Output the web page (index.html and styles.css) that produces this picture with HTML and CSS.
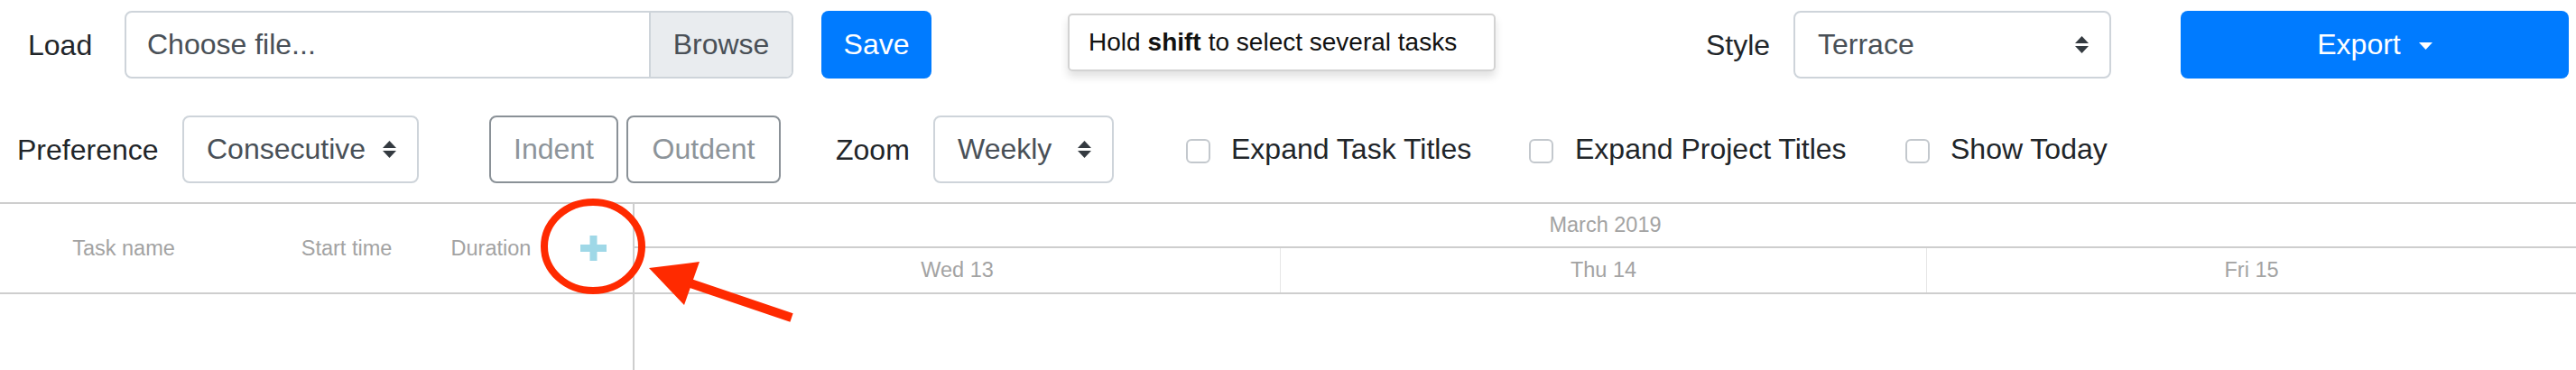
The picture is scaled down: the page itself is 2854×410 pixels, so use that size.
FILE: index.html
```html
<!DOCTYPE html>
<html>
<head>
<meta charset="utf-8">
<link rel="stylesheet" href="styles.css">
</head>
<body>
<div class="page">
  <div class="toolbar row1">
    <div class="label load-label">Load</div>
    <div class="file-input">
      <span class="file-text">Choose file...</span>
      <span class="file-browse">Browse</span>
    </div>
    <div class="btn btn-primary save-btn">Save</div>
    <div class="hint">Hold <b>shift</b> to select several tasks</div>
    <div class="label style-label">Style</div>
    <div class="select style-select">
      <span class="select-text">Terrace</span>
      <svg class="select-arrows" width="15" height="19" viewBox="0 0 15 19"><polygon points="0,8 7.5,0 15,8" fill="#343a40"/><polygon points="0,11 15,11 7.5,19" fill="#343a40"/></svg>
    </div>
    <div class="btn btn-primary export-btn">
      <span>Export</span>
      <svg class="caret" width="15" height="8" viewBox="0 0 15 8"><polygon points="0,0 15,0 7.5,8" fill="#fff"/></svg>
    </div>
  </div>

  <div class="toolbar row2">
    <div class="label pref-label">Preference</div>
    <div class="select pref-select">
      <span class="select-text">Consecutive</span>
      <svg class="select-arrows" width="15" height="19" viewBox="0 0 15 19"><polygon points="0,8 7.5,0 15,8" fill="#343a40"/><polygon points="0,11 15,11 7.5,19" fill="#343a40"/></svg>
    </div>
    <div class="btn btn-outline indent-btn">Indent</div>
    <div class="btn btn-outline outdent-btn">Outdent</div>
    <div class="label zoom-label">Zoom</div>
    <div class="select zoom-select">
      <span class="select-text">Weekly</span>
      <svg class="select-arrows" width="15" height="19" viewBox="0 0 15 19"><polygon points="0,8 7.5,0 15,8" fill="#343a40"/><polygon points="0,11 15,11 7.5,19" fill="#343a40"/></svg>
    </div>
    <label class="check check1"><span class="box"></span><span class="check-text">Expand Task Titles</span></label>
    <label class="check check2"><span class="box"></span><span class="check-text">Expand Project Titles</span></label>
    <label class="check check3"><span class="box"></span><span class="check-text">Show Today</span></label>
  </div>

  <div class="gantt">
    <div class="grid">
      <div class="grid-header">
        <div class="gcol col-name">Task name</div>
        <div class="gcol col-start">Start time</div>
        <div class="gcol col-dur">Duration</div>
        <div class="gcol col-add">
          <svg width="29" height="28" viewBox="0 0 29 28"><rect x="10.5" y="0" width="8" height="28" fill="#9fd8e7"/><rect x="0" y="10" width="29" height="8" fill="#9fd8e7"/></svg>
        </div>
      </div>
    </div>
    <div class="timeline">
      <div class="scale-row month">March 2019</div>
      <div class="scale-row days">
        <div class="day">Wed 13</div>
        <div class="day">Thu 14</div>
        <div class="day last">Fri 15</div>
      </div>
    </div>
  </div>

  <svg class="annot" width="2854" height="410" viewBox="0 0 2854 410">
    <ellipse cx="657" cy="273" rx="54" ry="49" fill="none" stroke="#ff2a00" stroke-width="8"/>
    <line x1="762" y1="313" x2="877" y2="352" stroke="#ff2a00" stroke-width="10"/>
    <polygon points="719,297 775,290 758,338" fill="#ff2a00"/>
  </svg>
</div>
</body>
</html>
```

FILE: styles.css
```css
* { box-sizing: border-box; }
html, body { margin: 0; padding: 0; background: #fff; }
body {
  font-family: "Liberation Sans", Arial, Helvetica, sans-serif;
  font-size: 32px;
  color: #212529;
  width: 2854px;
  height: 410px;
  overflow: hidden;
}
.page { position: relative; width: 2854px; height: 410px; padding-top: 12px; }

.toolbar { display: flex; align-items: center; height: 75px; }
.row2 { margin-top: 41px; }

.label { line-height: 1; white-space: nowrap; }
.load-label { width: 138px; padding-left: 31px; }
.style-label { margin-left: 233px; width: 97px; }
.pref-label { width: 202px; padding-left: 19px; }
.zoom-label { margin-left: 61px; width: 108px; }

.file-input {
  display: flex;
  width: 741px;
  height: 75px;
  border: 2px solid #ced4da;
  border-radius: 8px;
  overflow: hidden;
  color: #495057;
}
.file-text { flex: 1; display: flex; align-items: center; padding-left: 23px; }
.file-browse {
  display: flex; align-items: center; justify-content: center;
  width: 158px;
  background: #e9ecef;
  border-left: 2px solid #ced4da;
}

.btn {
  display: flex; align-items: center; justify-content: center;
  height: 75px;
  border-radius: 8px;
  white-space: nowrap;
}
.btn-primary { background: #007bff; color: #fff; }
.save-btn { margin-left: 31px; width: 122px; }
.export-btn { margin-left: 77px; width: 430px; gap: 20px; }
.caret { display: block; margin-top: 2px; }

.hint {
  margin-left: 151px;
  width: 474px;
  height: 64px;
  align-self: flex-start;
  margin-top: 3px;
  border: 2px solid #d3d3d3;
  border-radius: 5px;
  box-shadow: 0 6px 10px rgba(0, 0, 0, 0.12);
  font-family: "Liberation Sans", Arial, sans-serif;
  font-size: 28px;
  color: #111;
  display: flex; align-items: center;
  padding-left: 21px;
  white-space: nowrap;
}
.hint b { font-weight: bold; margin: 0 8px; }

.select {
  display: flex; align-items: center;
  height: 75px;
  border: 2px solid #ced4da;
  border-radius: 8px;
  color: #495057;
  padding-left: 25px;
  padding-right: 23px;
}
.select-text { flex: 1; white-space: nowrap; }
.select-arrows { display: block; }
.style-select { width: 352px; }
.pref-select { width: 262px; }
.zoom-select { width: 200px; }

.btn-outline {
  border: 2px solid #8a9197;
  color: #8d949a;
}
.indent-btn { margin-left: 78px; width: 143px; }
.outdent-btn { margin-left: 9px; width: 171px; }

.check { display: flex; align-items: center; white-space: nowrap; }
.check .box {
  width: 27px; height: 27px;
  border: 2px solid #c3c8cd;
  border-radius: 6px;
  margin-right: 23px;
  margin-top: 4px;
}
.check1 { margin-left: 80px; width: 380px; }
.check2 { width: 417px; }
.check2 .box { margin-right: 24px; }

.gantt {
  margin-top: 21px;
  width: 2854px; height: 186px;
  display: flex;
  border-top: 2px solid #cecece;
  font-family: "Liberation Sans", Arial, sans-serif;
  font-size: 23.5px;
  color: #a3a3a3;
}
.grid { width: 703px; border-right: 2px solid #cecece; }
.grid-header {
  display: flex;
  height: 100px;
  border-bottom: 2px solid #cecece;
}
.gcol { display: flex; align-items: center; justify-content: center; white-space: nowrap; }
.col-name { width: 274px; }
.col-start { width: 220px; }
.col-dur { width: 100px; }
.col-add { width: 107px; padding-left: 20px; }

.timeline { flex: 1; }
.scale-row { display: flex; }
.month {
  height: 49px;
  border-bottom: 2px solid #cecece;
  align-items: center; justify-content: center;
}
.days { height: 51px; border-bottom: 2px solid #cecece; }
.day {
  width: 716px;
  border-right: 1px solid #e6e6e6;
  display: flex; align-items: center; justify-content: center;
}
.day.last { border-right: none; flex: 1; }

.annot { position: absolute; left: 0; top: 0; pointer-events: none; }
```
